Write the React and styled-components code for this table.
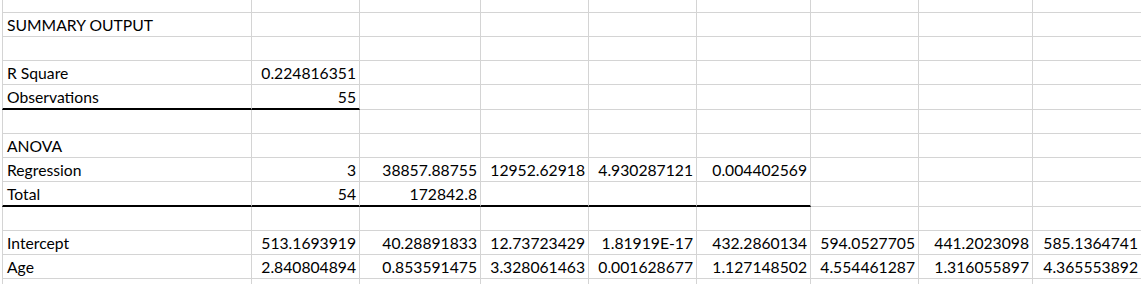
import styled, { createGlobalStyle } from "styled-components";

const GlobalStyle = createGlobalStyle`
  html, body {
    margin: 0;
    padding: 0;
    background: #fff;
    overflow: hidden;
  }
`;

const COLS = [250, 108, 121, 108, 108, 114, 108, 114, 108];

// each row: height (content + bottom border), cells, thick bottom up to column n
const ROWS = [
  { h: 13, cells: [] },
  { h: 24, cells: ["SUMMARY OUTPUT"] },
  { h: 24, cells: [] },
  { h: 24, cells: ["R Square", "0.224816351"] },
  { h: 25, cells: ["Observations", "55"], thick: 2 },
  { h: 24, cells: [] },
  { h: 24, cells: ["ANOVA"] },
  {
    h: 24,
    cells: ["Regression", "3", "38857.88755", "12952.62918", "4.930287121", "0.004402569"],
  },
  { h: 25, cells: ["Total", "54", "172842.8"], thick: 6 },
  { h: 24, cells: [] },
  {
    h: 24,
    cells: [
      "Intercept", "513.1693919", "40.28891833", "12.73723429", "1.81919E-17",
      "432.2860134", "594.0527705", "441.2023098", "585.1364741",
    ],
  },
  {
    h: 24,
    cells: [
      "Age", "2.840804894", "0.853591475", "3.328061463", "0.001628677",
      "1.127148502", "4.554461287", "1.316055897", "4.365553892",
    ],
  },
  { h: 10, cells: [], open: true },
];

export default function App() {
  return (
    <>
      <GlobalStyle />
      <Sheet>
        {ROWS.map((row, r) => (
          <Row key={r} $h={row.h}>
            {COLS.map((w, c) => (
              <Cell
                key={c}
                $first={c === 0}
                $last={c === COLS.length - 1}
                $num={c > 0}
                $thick={row.thick && c < row.thick}
                $open={row.open}
              >
                {row.cells[c] || ""}
              </Cell>
            ))}
          </Row>
        ))}
      </Sheet>
    </>
  );
}

const Sheet = styled.div`
  width: 1141px;
  height: 284px;
  overflow: hidden;
  padding-left: 2px;
  box-sizing: border-box;
  display: flex;
  flex-direction: column;
  font-family: "Lato", "Open Sans", sans-serif;
  font-size: 15.7px;
  color: #000;
`;

const Row = styled.div`
  display: grid;
  grid-template-columns: ${COLS.map((w) => `${w}px`).join(" ")};
  height: ${(p) => p.$h}px;
  flex: none;
`;

const Cell = styled.div`
  box-sizing: border-box;
  display: flex;
  align-items: flex-end;
  justify-content: ${(p) => (p.$num ? "flex-end" : "flex-start")};
  padding: 0 3px 1px 4px;
  line-height: 20px;
  white-space: nowrap;
  overflow: hidden;
  border-left: ${(p) => (p.$first ? "1px solid #d4d4d4" : "none")};
  border-right: ${(p) => (p.$last ? "none" : "1px solid #d4d4d4")};
  border-bottom: ${(p) =>
    p.$open ? "none" : p.$thick ? "2px solid #000" : "1px solid #d4d4d4"};
`;
